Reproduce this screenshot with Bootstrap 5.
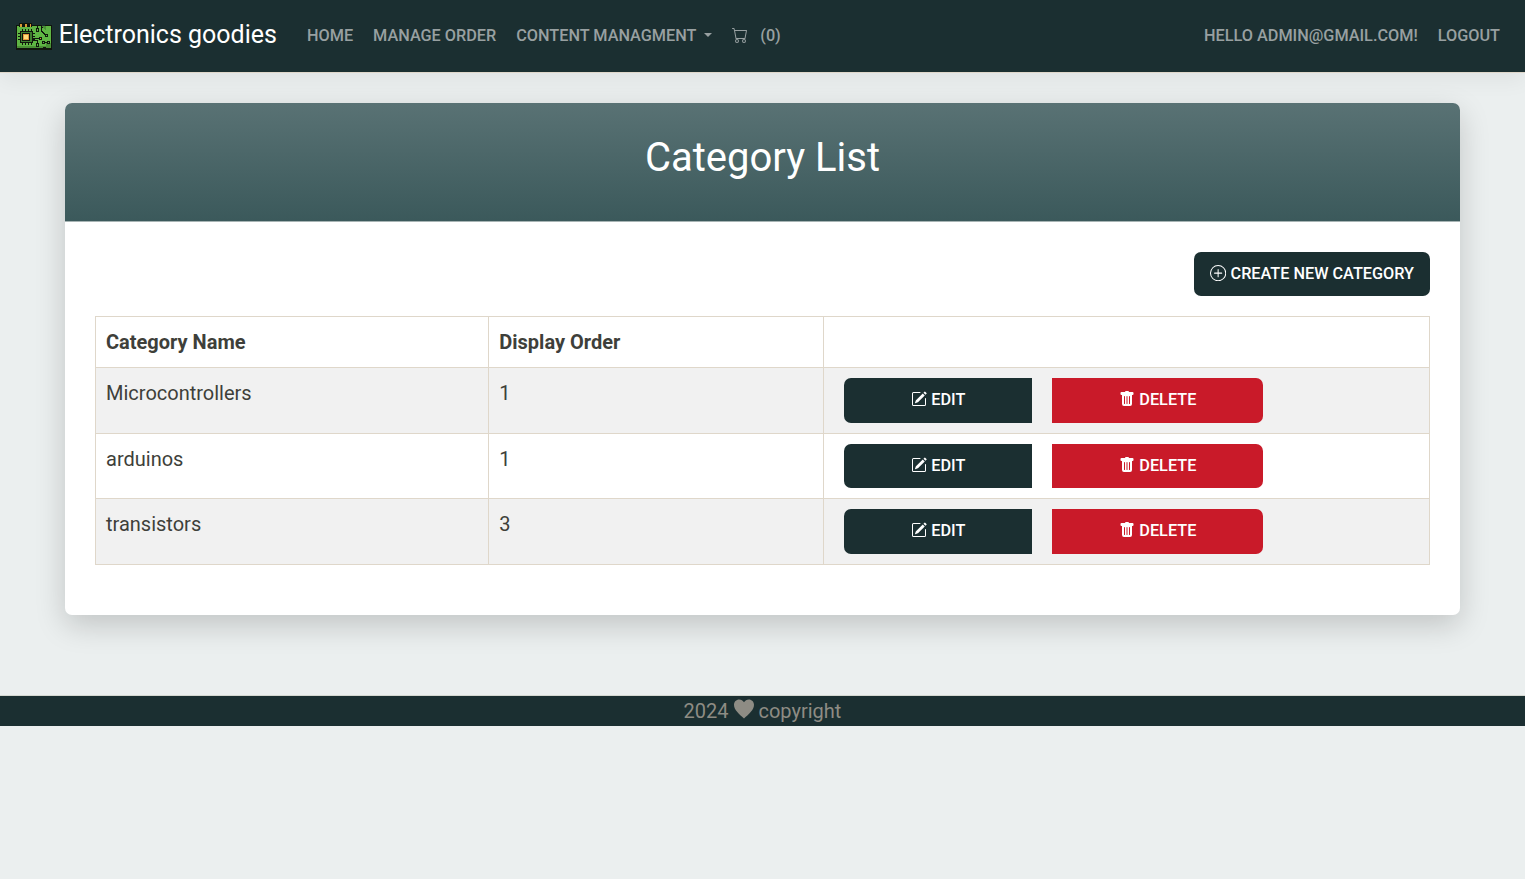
<!DOCTYPE html>
<html lang="en">
<head>
<meta charset="utf-8">
<meta name="viewport" content="width=device-width, initial-scale=1">
<title>Category List - Electronics goodies</title>
<link href="https://cdn.jsdelivr.net/npm/bootstrap@5.3.0/dist/css/bootstrap.min.css" rel="stylesheet">
<style>
html{font-size:20px}
body{font-family:Roboto,"Liberation Sans",sans-serif;background:#ebefef;color:#3e3f3a;--bs-border-color:#dfd7ca}
svg{fill:currentColor}
.topbar{background:#1b2f31;height:72.5px;padding:0 15px;border-bottom:1px solid #dfd7ca;box-shadow:0 8px 20px rgba(0,0,0,.05)}
.topbar .navbar-brand{color:#fff;font-size:25px;line-height:37.5px;padding:0;margin:-2px 20px 0 0;display:flex;align-items:center}
.topbar .navbar-brand svg{margin:3px 6.700px 0 0}
.topbar .nav-link{color:#98a0a1;font-size:16.25px;line-height:24px;font-weight:500;text-transform:uppercase;padding:10px}
.topbar .cart-icon{margin:-1px 12px 0 0}
.sheet{width:1395px;margin:30.5px auto 80px;border:0;border-radius:7px;box-shadow:0 10px 30px rgba(0,0,0,.18)}
.sheet .card-header{height:119px;padding:31px 0 30px;background:linear-gradient(#597274,#3b595b);color:#fff;border-bottom:1px solid #a7b4b4;border-radius:7px 7px 0 0}
.sheet h1{font-size:40px;font-weight:400;line-height:48px;margin:0}
.sheet .card-body{padding:30px 30px 50px}
.btn{--bs-btn-font-size:16.25px;--bs-btn-line-height:24px;--bs-btn-font-weight:500;--bs-btn-border-width:0;border-radius:7px;text-transform:uppercase;color:#fff;padding:10px 16px;height:44px}
.btn svg{vertical-align:-2px}
.btn-deep,.btn-deep:hover{background:#1b2f31;color:#fff}
.btn-red,.btn-red:hover{background:#c91a29;color:#fff}
.grid{table-layout:fixed;--bs-table-color:#3e3f3a;--bs-table-striped-color:#3e3f3a;--bs-table-bg:#fff;--bs-table-striped-bg:#f1f1f1;border-color:#dfd7ca}
.grid>:not(caption)>*>*{padding:10px}
.grid tbody td{height:65.5px}
.grid .btn{height:44.5px;padding-top:10.4px}
.grid .btn-deep{width:188px;border-radius:7px 0 0 7px;margin-right:10px}
.grid .btn-red{width:211px;border-radius:0 7px 7px 0;margin-left:10px}
.c-name{width:393.3px}.c-order{width:335px}
.foot{background:#1b2f31;border-top:1px solid #d5d8d1;height:31px;line-height:30px;color:#8e8c84}
</style>
</head>
<body>
<svg width="0" height="0" class="position-absolute" aria-hidden="true">
<symbol id="pencil" viewBox="0 0 16 16"><path d="M15.502 1.94a.5.5 0 0 1 0 .706L14.459 3.69l-2-2L13.502.646a.5.5 0 0 1 .707 0l1.293 1.293zm-1.75 2.456-2-2L4.939 9.21a.5.5 0 0 0-.121.196l-.805 2.414a.25.25 0 0 0 .316.316l2.414-.805a.5.5 0 0 0 .196-.12l6.813-6.814z"/><path fill-rule="evenodd" d="M1 13.5A1.5 1.5 0 0 0 2.5 15h11a1.5 1.5 0 0 0 1.5-1.5v-6a.5.5 0 0 0-1 0v6a.5.5 0 0 1-.5.5h-11a.5.5 0 0 1-.5-.5v-11a.5.5 0 0 1 .5-.5H9a.5.5 0 0 0 0-1H2.5A1.5 1.5 0 0 0 1 2.500v11z"/></symbol>
<symbol id="trash" viewBox="0 0 16 16"><path d="M2.5 1a1 1 0 0 0-1 1v1a1 1 0 0 0 1 1H3v9a2 2 0 0 0 2 2h6a2 2 0 0 0 2-2V4h.5a1 1 0 0 0 1-1V2a1 1 0 0 0-1-1H10a1 1 0 0 0-1-1H7a1 1 0 0 0-1 1H2.500zm3 4a.5.5 0 0 1 .5.5v7a.5.5 0 0 1-1 0v-7a.5.5 0 0 1 .5-.5zM8 5a.5.5 0 0 1 .5.5v7a.5.5 0 0 1-1 0v-7A.5.5 0 0 1 8 5zm3 .5v7a.5.5 0 0 1-1 0v-7a.5.5 0 0 1 1 0z"/></symbol>
</svg>
<nav class="navbar navbar-expand topbar">
<a class="navbar-brand" href="#">
<svg width="37" height="27" viewBox="0 0 37 27" shape-rendering="crispEdges">
<path fill="#10150d" d="M1 2h3V0h13v2h10v1h3v-1h7v25H1z"/>
<path fill="#5fb544" d="M2 3h25v2h4V3h5v22H2z"/>
<path fill="#4a9036" d="M2 23h34v2H2zM27 3h4v4l-4-3zM31 20h5v4h-5z"/>
<path fill="#10150d" d="M4 0h13v4H4z"/>
<path fill="#d99a35" d="M5 1h2v3H5zM10 1h2v3h-2zM15 1h1v3h-1z"/>
<path fill="#10150d" d="M5 8h13v12H5zM7 6h1v16H7zM10 6h1v16h-1zM13 6h1v16h-1zM16 6h1v16h-1zM3 10h17v1H3zM3 13h17v1H3zM3 16h17v1H3zM28 24h3v3h-3z"/>
<path fill="#3f7d30" d="M6 9h11v10H6z"/><path fill="#10150d" d="M7 10h8v8H7z"/><path fill="#e69b3b" d="M8 11h6v6H8z"/><path fill="#ffdc7c" d="M9 12h4v4H9z"/>
<path fill="none" stroke="#10150d" d="M18 15.500h7M18 17.500h4v5M22.500 3v4M26.500 3v5l4 4"/>
<path fill="#10150d" d="M21 5h3v4h-3zM30 11h3v3h-3zM24 14h3v3h-3zM21 20h3v4h-3zM27 18h3v3h-3zM32 18h3v3h-3zM30 19h2v1h-2z"/>
<path fill="#d99a35" d="M25 15h1v1h-1z"/><path fill="#5fb544" d="M22 6h1v2h-1zM31 12h1v1h-1zM22 21h1v2h-1zM28 19h1v1h-1zM33 19h1v1h-1z"/>
</svg>Electronics goodies</a>
<ul class="navbar-nav">
<li class="nav-item"><a class="nav-link" href="#">Home</a></li>
<li class="nav-item"><a class="nav-link" href="#">Manage Order</a></li>
<li class="nav-item dropdown"><a class="nav-link dropdown-toggle" href="#" data-bs-toggle="dropdown">Content Managment </a></li>
<li class="nav-item"><a class="nav-link d-flex align-items-center" href="#"><svg class="cart-icon" width="16" height="16" viewBox="0 0 16 16"><path d="M0 1.500A.5.5 0 0 1 .5 1H2a.5.5 0 0 1 .485.379L2.890 3H14.500a.5.5 0 0 1 .491.592l-1.500 8A.5.5 0 0 1 13 12H4a.5.5 0 0 1-.491-.408L2.010 3.607 1.610 2H.5a.5.5 0 0 1-.5-.5zM3.102 4l1.313 7h8.170l1.313-7H3.102zM5 12a2 2 0 1 0 0 4 2 2 0 0 0 0-4zm7 0a2 2 0 1 0 0 4 2 2 0 0 0 0-4zm-7 1a1 1 0 1 1 0 2 1 1 0 0 1 0-2zm7 0a1 1 0 1 1 0 2 1 1 0 0 1 0-2z"/></svg>(0)</a></li>
</ul>
<ul class="navbar-nav ms-auto">
<li class="nav-item"><a class="nav-link" href="#">Hello admin@gmail.com!</a></li>
<li class="nav-item"><a class="nav-link" href="#">Logout</a></li>
</ul>
</nav>
<main class="card sheet">
<div class="card-header text-center"><h1>Category List</h1></div>
<div class="card-body">
<div class="d-flex justify-content-end mb-3"><a class="btn btn-deep" href="#"><svg width="16.25" height="16.25" viewBox="0 0 16 16"><path d="M8 15A7 7 0 1 1 8 1a7 7 0 0 1 0 14zm0 1A8 8 0 1 0 8 0a8 8 0 0 0 0 16z"/><path d="M8 4a.5.5 0 0 1 .5.5v3h3a.5.5 0 0 1 0 1h-3v3a.5.5 0 0 1-1 0v-3h-3a.5.5 0 0 1 0-1h3v-3A.5.5 0 0 1 8 4z"/></svg> Create New Category</a></div>
<table class="table table-bordered table-striped grid mb-0">
<colgroup><col class="c-name"><col class="c-order"><col></colgroup>
<thead><tr><th>Category Name</th><th>Display Order</th><th></th></tr></thead>
<tbody>
<tr><td>Microcontrollers</td><td>1</td><td><div class="d-flex ps-2"><a class="btn btn-deep" href="#"><svg width="16" height="16"><use href="#pencil"/></svg> Edit</a><a class="btn btn-red" href="#"><svg width="16" height="16"><use href="#trash"/></svg> Delete</a></div></td></tr>
<tr><td>arduinos</td><td>1</td><td><div class="d-flex ps-2"><a class="btn btn-deep" href="#"><svg width="16" height="16"><use href="#pencil"/></svg> Edit</a><a class="btn btn-red" href="#"><svg width="16" height="16"><use href="#trash"/></svg> Delete</a></div></td></tr>
<tr><td>transistors</td><td>3</td><td><div class="d-flex ps-2"><a class="btn btn-deep" href="#"><svg width="16" height="16"><use href="#pencil"/></svg> Edit</a><a class="btn btn-red" href="#"><svg width="16" height="16"><use href="#trash"/></svg> Delete</a></div></td></tr>
</tbody>
</table>
</div>
</main>
<footer class="foot text-center">2024 <svg width="20" height="20" viewBox="0 0 20 20" style="vertical-align:-1px"><path d="M10 19.500C5 15 0 11 0 5.800 0 2.800 2.200.5 5.200.5 7.200.5 9 1.600 10 3.300 11 1.600 12.800.5 14.800.5c3 0 5.200 2.300 5.200 5.300 0 5.200-5 9.200-10 13.700z"/></svg> copyright</footer>
<script src="https://cdn.jsdelivr.net/npm/bootstrap@5.3.0/dist/js/bootstrap.bundle.min.js"></script>
</body>
</html>
